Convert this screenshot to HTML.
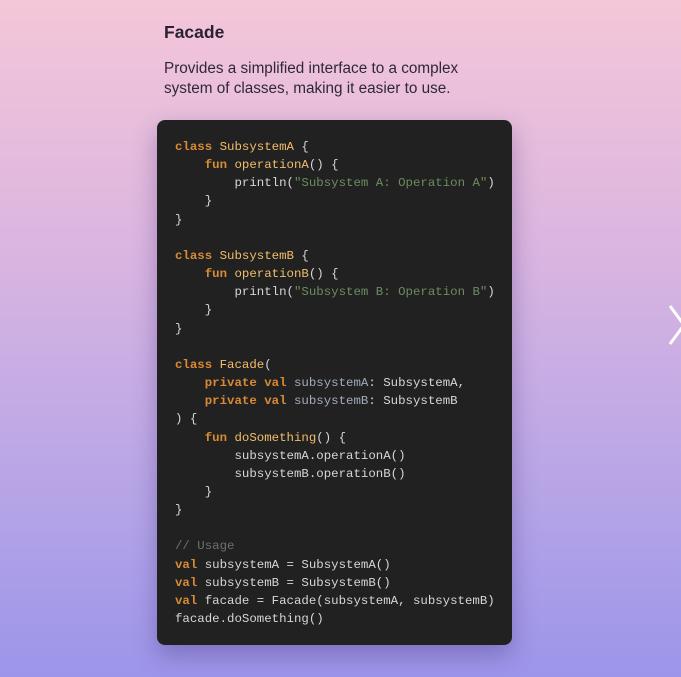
<!DOCTYPE html>
<html><head><style>
html,body{margin:0;padding:0}
body{width:681px;height:677px;overflow:hidden;background:linear-gradient(180deg,#f4c6d8 0%,#dcb6e0 35%,#b9a6e6 70%,#9c95ea 100%);font-family:"Liberation Sans",sans-serif;position:relative}
h1{position:absolute;left:164px;top:22px;margin:0;font-size:17.5px;font-weight:bold;color:#2a2233}
p{position:absolute;left:164px;top:59px;margin:0;font-size:15.3px;line-height:20px;color:#2e2838;width:312px}
.box{position:absolute;left:157px;top:120px;width:355px;height:525px;background:#212121;border-radius:8px;box-shadow:0 10px 24px rgba(60,40,110,.35);box-sizing:border-box;padding:18px 0 0 18px}
pre{margin:0;font-family:"Liberation Mono","DejaVu Sans Mono",monospace;font-size:12.4px;line-height:18.15px;color:#d6d6d6}
.k{color:#d98a35;font-weight:bold}.f{color:#f2bd6a}.s{color:#6d8c5f}.v{color:#a3abbb}.c{color:#707070}
svg{position:absolute;left:668px;top:304px}
</style></head><body>
<h1>Facade</h1>
<p>Provides a simplified interface to a complex system of classes, making it easier to use.</p>
<div class="box"><pre><span class="k">class</span> <span class="f">SubsystemA</span> {
    <span class="k">fun</span> <span class="f">operationA</span>() {
        println(<span class="s">"Subsystem A: Operation A"</span>)
    }
}

<span class="k">class</span> <span class="f">SubsystemB</span> {
    <span class="k">fun</span> <span class="f">operationB</span>() {
        println(<span class="s">"Subsystem B: Operation B"</span>)
    }
}

<span class="k">class</span> <span class="f">Facade</span>(
    <span class="k">private val</span> <span class="v">subsystemA</span>: SubsystemA,
    <span class="k">private val</span> <span class="v">subsystemB</span>: SubsystemB
) {
    <span class="k">fun</span> <span class="f">doSomething</span>() {
        subsystemA.operationA()
        subsystemB.operationB()
    }
}

<span class="c">// Usage</span>
<span class="k">val</span> subsystemA = SubsystemA()
<span class="k">val</span> subsystemB = SubsystemB()
<span class="k">val</span> facade = Facade(subsystemA, subsystemB)
facade.doSomething()</pre></div>
<svg width="20" height="44" viewBox="0 0 20 44"><polyline points="2,2 16,21 2,40" fill="none" stroke="#fff" stroke-width="3"/></svg>
</body></html>
